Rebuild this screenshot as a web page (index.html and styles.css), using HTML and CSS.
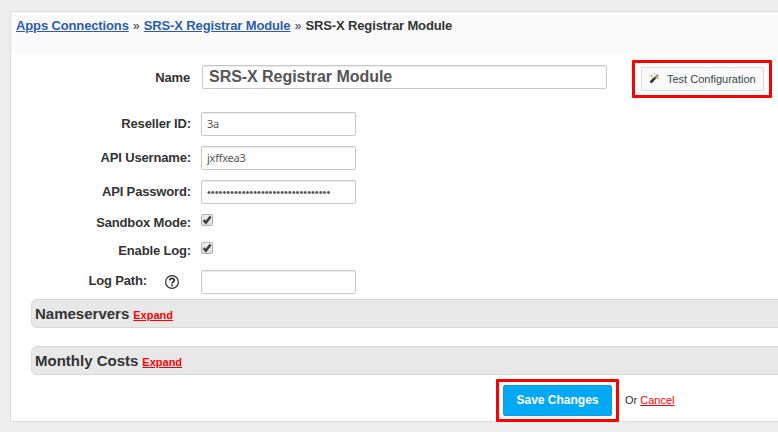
FILE: index.html
```
<!DOCTYPE html>
<html lang="en">
<head>
    <meta charset="UTF-8">
    <meta name="viewport" content="width=device-width, initial-scale=1.0">
    <title>SRS-X Registrar Module</title>
    <link rel="stylesheet" href="styles.css">
</head>
<body>
    <div class="panel">
        <!-- Breadcrumb -->
        <div class="breadcrumb">
            <a href="#">Apps Connections</a>
            <span class="sep">»</span>
            <a href="#">SRS-X Registrar Module</a>
            <span class="sep">»</span>
            <strong>SRS-X Registrar Module</strong>
        </div>

        <form class="config">
            <div class="row name-row">
                <label for="name">Name</label>
                <input type="text" id="name" class="name-input" value="SRS-X Registrar Module">
                <div class="highlight test-highlight">
                    <button type="button" class="test-button">
                        <svg class="wand" width="11" height="11" viewBox="0 0 11 11">
                            <path d="M1.5 9.5L6.3 4.7" stroke="#333" stroke-width="2.6"/>
                            <path d="M6.3 4.7L9 2" stroke="#888" stroke-width="2.4"/>
                            <path d="M1 3h3M2.5 1.5v3M4.5 1h2M8 5.5h2M9 4.5v2" stroke="#d3bd55" stroke-width="1"/>
                        </svg>
                        <span>Test Configuration</span>
                    </button>
                </div>
            </div>

            <!-- Module settings -->
            <div class="row">
                <label for="reseller">Reseller ID:</label>
                <input type="text" id="reseller" class="field" value="3a">
            </div>
            <div class="row">
                <label for="username">API Username:</label>
                <input type="text" id="username" class="field" value="jxffxea3">
            </div>
            <div class="row">
                <label for="password">API Password:</label>
                <input type="text" id="password" class="field dots" value="••••••••••••••••••••••••••••••••">
            </div>
            <div class="row check-row">
                <label>Sandbox Mode:</label>
                <span class="checkbox">
                    <svg width="12" height="12" viewBox="0 0 12 12"><path d="M2.6 6.2L4.9 8.6L9.6 2.6" fill="none" stroke="#3b3b3b" stroke-width="2.4"/></svg>
                </span>
            </div>
            <div class="row check-row">
                <label>Enable Log:</label>
                <span class="checkbox">
                    <svg width="12" height="12" viewBox="0 0 12 12"><path d="M2.6 6.2L4.9 8.6L9.6 2.6" fill="none" stroke="#3b3b3b" stroke-width="2.4"/></svg>
                </span>
            </div>
            <div class="row log-row">
                <label for="logpath">Log Path:</label>
                <svg class="help" width="14" height="14" viewBox="0 0 14 14">
                    <circle cx="7" cy="7" r="6.4" fill="none" stroke="#333" stroke-width="1.2"/>
                    <path d="M4.8 5.4C4.9 2.7 9.3 2.8 9.3 5.3C9.3 6.8 7.1 6.7 7.1 8.5M7.1 9.4V11.2" fill="none" stroke="#333" stroke-width="1.8"/>
                </svg>
                <input type="text" id="logpath" class="field" value="">
            </div>

            <div class="section">
                <h3>Nameservers</h3>
                <a href="#">Expand</a>
            </div>
            <div class="section">
                <h3>Monthly Costs</h3>
                <a href="#">Expand</a>
            </div>

            <div class="actions">
                <div class="highlight">
                    <button type="button" class="save-button">Save Changes</button>
                </div>
                <span class="or">Or <a href="#">Cancel</a></span>
            </div>
        </form>
    </div>
</body>
</html>
```

FILE: styles.css
```
* {
    box-sizing: border-box;
}
body {
    margin: 0;
    padding: 11px 0 0 10px;
    height: 432px;
    overflow: hidden;
    background: #eee;
    color: #333;
    font-family: "Liberation Sans", Arial, sans-serif;
    font-size: 13px;
}
input, button {
    font-family: inherit;
    margin: 0;
}
.panel {
    width: 790px;
    height: 411px;
    background: #fff;
    border: 1px solid #ddd;
}
.breadcrumb {
    display: flex;
    height: 42px;
    padding: 6px 0 0 5px;
    background: #fafafa;
    font-weight: bold;
    letter-spacing: -0.13px;
    line-height: 16px;
    white-space: nowrap;
}
.breadcrumb a {
    color: #2a5db0;
}
.breadcrumb .sep {
    width: 15px;
    font-size: 12px;
    font-weight: normal;
    text-align: center;
}
.config {
    padding-left: 20px;
}
.row {
    display: flex;
    height: 24px;
    margin-bottom: 10px;
}
.row label {
    width: 160px;
    margin-right: 10px;
    font-weight: bold;
    letter-spacing: -0.15px;
    line-height: 24px;
    text-align: right;
    white-space: nowrap;
}
.name-row {
    height: 38px;
    margin: 6px 0 14px;
}
.name-row label {
    width: 159px;
    margin-right: 12px;
    line-height: 36px;
}
.name-input, .field {
    border: 1px solid #c8c8c8;
    border-radius: 2px;
    background: #fff;
    box-shadow: inset 0 1px 1px rgba(0, 0, 0, 0.08);
    outline: none;
}
.name-input {
    width: 405px;
    height: 24px;
    margin-top: 5px;
    padding: 0 6px;
    color: #555;
    font-size: 16px;
    font-weight: bold;
    letter-spacing: -0.04px;
}
.field {
    width: 155px;
    height: 24px;
    padding: 0 5px 1px;
    color: #555;
    font-family: "Noto Sans", "Open Sans", sans-serif;
    font-size: 11px;
    letter-spacing: -0.25px;
}
.dots {
    font-family: "Liberation Sans", sans-serif;
    letter-spacing: 0;
}
/* red frames around the two buttons */
.highlight {
    border: 3px solid #f00;
    border-radius: 1px;
}
.test-highlight {
    width: 140px;
    height: 38px;
    margin-left: 25px;
    padding: 4px 5px 0 6px;
}
.test-button {
    display: flex;
    align-items: center;
    width: 123px;
    height: 24px;
    padding: 0 0 0 7px;
    border: 1px solid #ddd;
    background: #fafafa;
    color: #37474f;
    font-size: 11px;
    white-space: nowrap;
}
.wand {
    margin: -2px 7px 0 0;
}
.check-row {
    height: 18px;
}
.check-row label {
    line-height: 18px;
}
.checkbox {
    width: 12px;
    height: 12px;
    border: 1px solid #b0b0b0;
    border-radius: 2px;
    background: linear-gradient(#eee, #ddd);
}
.checkbox svg {
    display: block;
    margin: -1px;
}
.log-row {
    margin-bottom: 5px;
}
.log-row label {
    width: 116px;
    margin-right: 18px;
    line-height: 22px;
}
.help {
    margin: 5px 22px 0 0;
}
.section {
    display: flex;
    align-items: baseline;
    height: 29px;
    margin-bottom: 18px;
    padding: 5px 0 0 3px;
    border: 1px solid #d8d8d8;
    border-radius: 6px;
    background: #e8e8e8;
}
.section h3 {
    margin: 0 4px 0 0;
    font-size: 15px;
    line-height: 18px;
}
.section a {
    color: #f00;
    font-size: 11px;
    font-weight: bold;
}
.actions {
    display: flex;
    margin: -14px 0 0 465px;
}
.actions .highlight {
    width: 123px;
    height: 43px;
    padding: 3px 4px;
}
.save-button {
    width: 109px;
    height: 31px;
    padding: 0 0 2px;
    border: 1px solid #0d9be6;
    border-radius: 2px;
    background: #03a9f4;
    color: #fff;
    font-size: 12px;
    font-weight: bold;
    white-space: nowrap;
}
.or {
    margin-left: 6px;
    font-size: 11px;
    line-height: 42px;
}
.or a {
    color: #f00;
}
```
